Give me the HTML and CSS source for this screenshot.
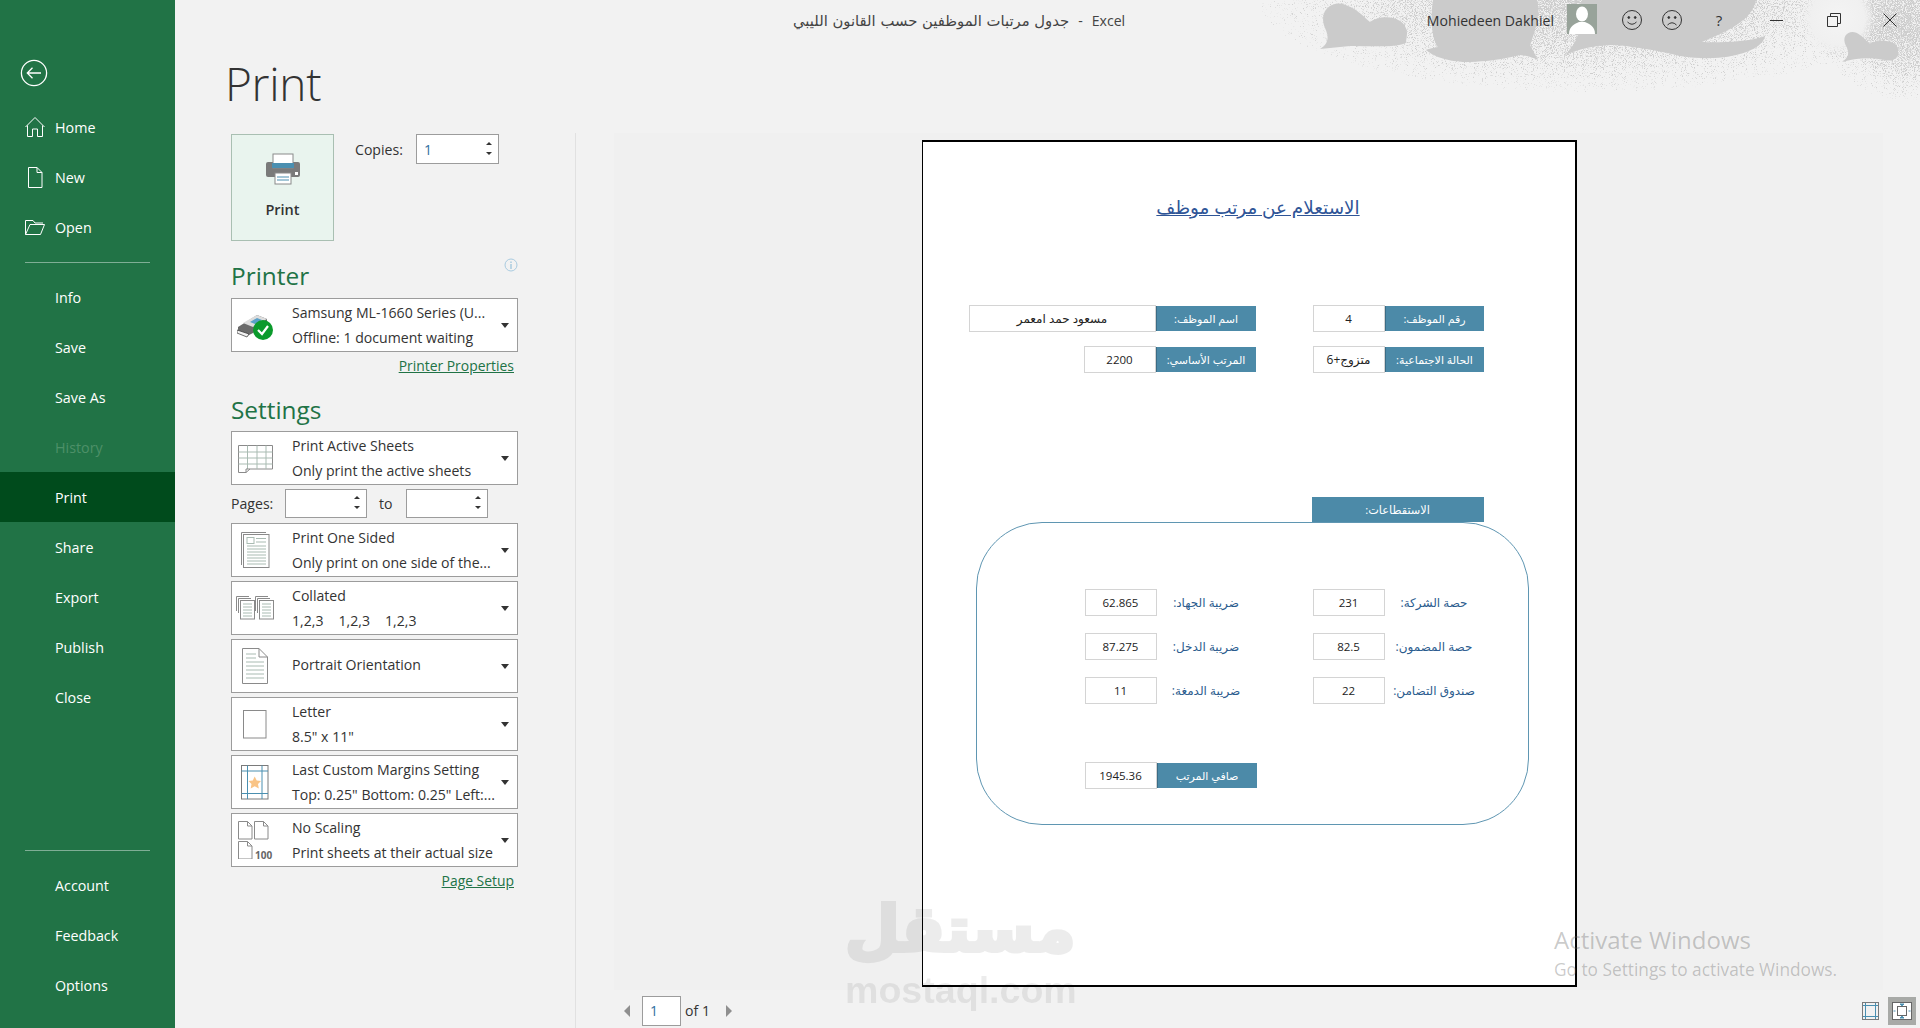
FILE: index.html
```html
<!DOCTYPE html>
<html lang="en">
<head>
<meta charset="utf-8">
<title>Print - Excel</title>
<link rel="stylesheet" href="styles.css">
</head>
<body>
<aside class="sidebar">
  <div class="back">
    <svg width="30" height="30" viewBox="0 0 30 30" fill="none" stroke="#fff" stroke-width="1.3"><circle cx="15" cy="15" r="12.6"/><path d="M22 15H8.5M13.5 9.8 8.3 15l5.2 5.2"/></svg>
  </div>
  <nav class="nav">
    <a class="nav-item"><svg class="nav-icon" width="22" height="22" viewBox="0 0 22 22" fill="none" stroke="#fff" stroke-width="1"><path d="M1.5 11 11 1.5 20.5 11M3.5 9.5V20.5H8.5V13H13.500V20.5H18.500V9.500"/></svg>Home</a>
    <a class="nav-item"><svg class="nav-icon" width="22" height="22" viewBox="0 0 22 22" fill="none" stroke="#fff" stroke-width="1"><path d="M4.500 1.500H13L18 6.500V21.500H4.500ZM13 1.500V6.500H18"/></svg>New</a>
    <a class="nav-item"><svg class="nav-icon" width="22" height="22" viewBox="0 0 22 22" fill="none" stroke="#fff" stroke-width="1"><path d="M1.500 18.500V4.500H9L11 7H19M1.500 18.500H16.500L20.500 8.500H6L1.500 18.500"/></svg>Open</a>
  </nav>
  <hr class="nav-rule">
  <nav class="nav">
    <a class="nav-item">Info</a>
    <a class="nav-item">Save</a>
    <a class="nav-item">Save As</a>
    <a class="nav-item disabled">History</a>
    <a class="nav-item active">Print</a>
    <a class="nav-item">Share</a>
    <a class="nav-item">Export</a>
    <a class="nav-item">Publish</a>
    <a class="nav-item">Close</a>
  </nav>
  <div class="nav-bottom">
    <hr class="nav-rule">
    <nav class="nav">
      <a class="nav-item">Account</a>
      <a class="nav-item">Feedback</a>
      <a class="nav-item">Options</a>
    </nav>
  </div>
</aside>

<main class="main">
  <svg class="clouds" width="680" height="110" viewBox="0 0 680 110">
    <defs>
      <radialGradient id="fadeA"><stop offset="0" stop-opacity=".8"/><stop offset=".55" stop-opacity=".56"/><stop offset="1" stop-opacity=".2"/></radialGradient>
      <radialGradient id="glow"><stop offset="0" stop-color="#f4f4f4"/><stop offset=".7" stop-color="#f0f0f0"/><stop offset="1" stop-color="#f0f0f0" stop-opacity="0"/></radialGradient>
      <filter id="grain" x="0" y="0" width="100%" height="100%" color-interpolation-filters="sRGB">
        <feTurbulence type="fractalNoise" baseFrequency="1.1" numOctaves="2" seed="4" result="n"/>
        <feColorMatrix in="n" type="matrix" values="0 0 0 0 0  0 0 0 0 0  0 0 0 0 0  1.8 0 0 0 -.4" result="na"/>
        <feComposite in="SourceAlpha" in2="na" operator="arithmetic" k2="1" k3="1" k4="-1" result="t"/>
        <feComponentTransfer in="t" result="d"><feFuncA type="linear" slope="3"/></feComponentTransfer>
        <feFlood flood-color="#cdcdcd"/>
        <feComposite in2="d" operator="in"/>
      </filter>
    </defs>
    <g filter="url(#grain)">
      <ellipse cx="350" cy="0" rx="330" ry="92" fill="url(#fadeA)"/>
      <ellipse cx="670" cy="30" rx="90" ry="70" fill="url(#fadeA)"/>
    </g>
    <circle cx="598" cy="18" r="38" fill="url(#glow)"/>
    <g class="cloud-shape">
      <path d="M80 49Q92 42 85 28C78 10 92 1 103 4 116 8 122 15 130 22 140 14 165 15 167 32 167 40 165 42 167 42 160 48 130 46 110 46 95 45 80 49Z"/>
      <path d="M193 0C190 20 192 40 198 47 190 48 186 50 186 50 200 62 225 62 225 62 255 62 280 55 280 55 290 56 298 60 298 60L290 45C298 25 300 10 297 0Z"/>
      <path d="M342 0C342 25 340 40 325 55 350 44 375 45 375 45 410 48 440 56 440 56 490 64 515 48 515 48 525 42 525 36 525 36 505 44 462 42 462 42 490 30 512 20 516 0Z"/>
      <path d="M602 62Q612 55 606 46C600 34 612 28 620 35 625 38 627 42 630 44 640 38 660 40 658 52 660 58 652 62 645 60 630 57 615 58 602 62Z"/>
    </g>
  </svg>

  <header class="titlebar">
    <div class="doc-title"><bdi class="ar">جدول مرتبات الموظفين حسب القانون الليبي</bdi><span class="sep">-</span>Excel</div>
    <div class="user">
      <span class="user-name">Mohiedeen Dakhiel</span>
      <svg class="avatar" width="30" height="30" viewBox="0 0 30 30"><rect width="30" height="30" fill="#98a39a"/><ellipse cx="15" cy="10" rx="6" ry="7.500" fill="#fff"/><path d="M2 30C2 22 8 20 12 18H18C22 20 28 22 28 30Z" fill="#fff"/></svg>
      <svg class="tb-smile" width="22" height="22" viewBox="0 0 22 22" fill="none" stroke="#333" stroke-width="1"><circle cx="11" cy="11" r="9.500"/><circle cx="7.800" cy="8.500" r=".9" fill="#333"/><circle cx="14.200" cy="8.500" r=".9" fill="#333"/><path d="M6.500 13Q11 17.500 15.500 13"/></svg>
      <svg class="tb-frown" width="22" height="22" viewBox="0 0 22 22" fill="none" stroke="#333" stroke-width="1"><circle cx="11" cy="11" r="9.500"/><circle cx="7.800" cy="8.500" r=".9" fill="#333"/><circle cx="14.200" cy="8.500" r=".9" fill="#333"/><path d="M6.500 16Q11 11.500 15.500 16"/></svg>
      <span class="help">?</span>
      <svg class="tb-min" width="14" height="14" viewBox="0 0 14 14" stroke="#333" stroke-width="1"><path d="M0 7.500H13"/></svg>
      <svg class="tb-restore" width="14" height="14" viewBox="0 0 14 14" fill="none" stroke="#333" stroke-width="1"><path d="M.5 3.500H10.500V13.500H.5ZM3.500 3.500V.5H13.500V10.500H10.500"/></svg>
      <svg class="tb-close" width="14" height="14" viewBox="0 0 14 14" stroke="#333" stroke-width="1"><path d="M.5.5 13.500 13.500M13.500.5.5 13.500"/></svg>
    </div>
  </header>

  <h1 class="page-title">Print</h1>

  <div class="workspace">
    <section class="panel">
      <div class="print-row">
        <button class="print-btn">
          <svg width="36" height="32" viewBox="0 0 36 32"><path d="M3 9H33Q35 9 35 11V22Q35 24 33 24H3Q1 24 1 22V11Q1 9 3 9Z" fill="#7a7a7a"/><rect x="8" y="1" width="20" height="14" fill="#fff" stroke="#8a8a8a"/><rect x="7" y="10" width="22" height="5" fill="#4a8fb0"/><rect x="10" y="20" width="16" height="11" fill="#fff" stroke="#8a8a8a"/><path d="M12 24H24M12 27H24" stroke="#4a8fb0"/><rect x="30" y="19" width="3" height="3" fill="#fff"/></svg>
          <span>Print</span>
        </button>
        <div class="copies">
          <label>Copies:</label>
          <div class="spin spin-copies"><span class="spin-val">1</span><span class="arrows"><i class="up"></i><i class="down"></i></span></div>
        </div>
      </div>

      <div class="sec-head printer-head">
        <h2>Printer</h2>
        <svg width="14" height="14" viewBox="0 0 14 14" fill="none" stroke="#a9cbe0"><circle cx="7" cy="7" r="6"/><path d="M7 3.500V5M7 6V11" stroke-width="1.500"/></svg>
      </div>
      <div class="combo">
        <span class="combo-icon"><svg width="36" height="30" viewBox="0 0 36 30"><path d="M1 17 20 5 30 9 30 16 10 26 1 22Z" fill="#6a6a6a"/><path d="M6 13 20 5 30 9 16 17Z" fill="#ddd"/><path d="M13 12 20 8 25 10 18 14Z" fill="#5aa0c8"/><path d="M0 20 12 24 10 27 0 23Z" fill="#f2f2f2" stroke="#333" stroke-width=".7"/><circle cx="26" cy="20" r="10" fill="#0b9a2c"/><path d="M21 20 25 24 31 16" fill="none" stroke="#fff" stroke-width="2.200"/></svg></span>
        <span class="combo-text"><b>Samsung ML-1660 Series (U...</b><b>Offline: 1 document waiting</b></span>
        <i class="caret"></i>
      </div>
      <div class="link-row"><a class="link">Printer Properties</a></div>

      <h2 class="settings-head">Settings</h2>
      <div class="combo">
        <span class="combo-icon"><svg width="36" height="30" viewBox="0 0 36 30" fill="none"><path d="M1.500 2.500H35.500V26H13L9 29.500H1.500Z" fill="#fff" stroke="#8a8a8a"/><path d="M1.500 9H35.500M1.500 15H35.500M1.500 21H35.500M10.500 2.500V26M20 2.500V26M29 2.500V26" stroke="#a9bbb2"/><path d="M9 29.500V26H13" stroke="#8a8a8a"/></svg></span>
        <span class="combo-text"><b>Print Active Sheets</b><b>Only print the active sheets</b></span>
        <i class="caret"></i>
      </div>
      <div class="pages-row">
        <label>Pages:</label>
        <div class="spin spin-page"><span class="spin-val"></span><span class="arrows"><i class="up"></i><i class="down"></i></span></div>
        <label class="to">to</label>
        <div class="spin spin-page"><span class="spin-val"></span><span class="arrows"><i class="up"></i><i class="down"></i></span></div>
      </div>
      <div class="combo">
        <span class="combo-icon"><svg width="30" height="38" viewBox="0 0 30 38" fill="none"><path d="M1.500 34V1.500H26" stroke="#8a8a8a"/><rect x="3.500" y="3.500" width="25.500" height="33" fill="#fff" stroke="#8a8a8a"/><rect x="7" y="6.500" width="7" height="6" stroke="#a9bbb2"/><path d="M16 7.500H26M16 11H26M7 15H26M7 18H26M7 21H26M7 24H26M7 27H26M7 30H26M7 33H26" stroke="#a9bbb2"/></svg></span>
        <span class="combo-text"><b>Print One Sided</b><b>Only print on one side of the...</b></span>
        <i class="caret"></i>
      </div>
      <div class="combo">
        <span class="combo-icon"><svg width="38" height="24" viewBox="0 0 38 24" fill="none" stroke="#8a8a8a"><path d="M.5 15V.5H13M2.500 17V2.500H15"/><rect x="4.500" y="4.500" width="14" height="18.500" fill="#fff"/><path d="M7 8H16M7 11H16M7 14H16M7 17H16M7 20H16" stroke="#a9bbb2"/><path d="M19.500 15V.5H32M21.500 17V2.500H34"/><rect x="23.500" y="4.500" width="14" height="18.500" fill="#fff"/><path d="M26 8H35M26 11H35M26 14H35M26 17H35M26 20H35" stroke="#a9bbb2"/></svg></span>
        <span class="combo-text"><b>Collated</b><b class="collate"><em>1,2,3</em><em>1,2,3</em><em>1,2,3</em></b></span>
        <i class="caret"></i>
      </div>
      <div class="combo">
        <span class="combo-icon"><svg width="26" height="36" viewBox="0 0 26 36" fill="none"><path d="M.5.5H17L25.500 9V35.500H.5ZM17 .5V9H25.500" fill="#fff" stroke="#8a8a8a"/><path d="M4 6H14M4 10H14M4 14H22M4 18H22M4 22H22M4 26H22M4 30H22" stroke="#a9bbb2"/></svg></span>
        <span class="combo-text single"><b>Portrait Orientation</b></span>
        <i class="caret"></i>
      </div>
      <div class="combo">
        <span class="combo-icon"><svg width="24" height="29" viewBox="0 0 24 29"><rect x=".5" y=".5" width="22.500" height="27.500" fill="#fff" stroke="#8a8a8a"/></svg></span>
        <span class="combo-text"><b>Letter</b><b>8.5" x 11"</b></span>
        <i class="caret"></i>
      </div>
      <div class="combo">
        <span class="combo-icon"><svg width="28" height="35" viewBox="0 0 28 35" fill="none"><rect x=".5" y=".5" width="26.500" height="33.500" fill="#fff" stroke="#7a7a7a"/><path d="M6.500 .5V34M21 .5V34M.5 6H27M.5 28.500H27" stroke="#4a8fb0"/><path d="M13.700 11.500 15.700 15.500 20 16 17 19 17.800 23.500 13.700 21.300 9.700 23.500 10.500 19 7.500 16 11.800 15.500Z" fill="#f9c486"/></svg></span>
        <span class="combo-text"><b>Last Custom Margins Setting</b><b>Top: 0.25" Bottom: 0.25" Left:...</b></span>
        <i class="caret"></i>
      </div>
      <div class="combo">
        <span class="combo-icon scale-icon"><svg width="34" height="38" viewBox="0 0 34 38" fill="none" stroke="#8a8a8a"><path d="M.5.5H9.500L14 5V18H.5ZM9.500.5V5H14M16.500.5H25.500L30 5V18H16.500ZM25.500.5V5H30M.5 20.500H9.500L14 25V38H.5ZM9.500 20.500V25H14"/></svg><span class="scale-num">100</span></span>
        <span class="combo-text"><b>No Scaling</b><b>Print sheets at their actual size</b></span>
        <i class="caret"></i>
      </div>
      <div class="link-row"><a class="link">Page Setup</a></div>
    </section>

    <section class="preview-col">
      <div class="preview">
        <article class="sheet" dir="ltr">
          <h3 class="sheet-title">الاستعلام عن مرتب موظف</h3>
          <div class="fields">
            <div class="val ar-val">مسعود حمد امعمر</div><div class="lab">اسم الموظف:</div><span></span><div class="val">4</div><div class="lab">رقم الموظف:</div>
            <div class="val short">2200</div><div class="lab">المرتب الأساسي:</div><span></span><div class="val ar-val" dir="rtl">متزوج+6</div><div class="lab">الحالة الاجتماعية:</div>
          </div>
          <div class="ded-head">الاستقطاعات:</div>
          <div class="ded-box">
            <div class="ded-grid">
              <div class="val">62.865</div><div class="dlab">ضريبة الجهاد:</div><span></span><div class="val">231</div><div class="dlab">حصة الشركة:</div>
              <div class="val">87.275</div><div class="dlab">ضريبة الدخل:</div><span></span><div class="val">82.5</div><div class="dlab">حصة المضمون:</div>
              <div class="val">11</div><div class="dlab">ضريبة الدمغة:</div><span></span><div class="val">22</div><div class="dlab">صندوق التضامن:</div>
            </div>
            <div class="net"><div class="val">1945.36</div><div class="lab">صافي المرتب</div></div>
          </div>
        </article>
      </div>
      <footer class="pager">
        <i class="tri-left"></i>
        <span class="page-num">1</span>
        <span class="of">of 1</span>
        <i class="tri-right"></i>
        <span class="view-btns">
          <svg width="18" height="18" viewBox="0 0 18 18" fill="none"><rect x=".5" y=".5" width="16" height="17" stroke="#7a7a7a"/><path d="M3.500 1V17M13.500 1V17M1 3.500H16M1 14.500H16" stroke="#4a8fb0"/></svg>
          <span class="view-active"><svg width="20" height="18" viewBox="0 0 20 18" fill="none"><rect x=".5" y=".5" width="19" height="17" fill="#fff" stroke="#666"/><rect x="5.500" y="4.500" width="9" height="9" stroke="#666"/><path d="M3.500 9H1.500M16.500 9H18.500M8 2H12L10 3.800ZM8 16H12L10 14.200Z" stroke="#4a8fb0" fill="#4a8fb0"/></svg></span>
        </span>
      </footer>
    </section>
  </div>

  <div class="watermark">
    <div class="wm-ar">مستقل</div>
    <div class="wm-en">mostaql.com</div>
  </div>
  <div class="activate">
    <div class="act-1">Activate Windows</div>
    <div class="act-2">Go to Settings to activate Windows.</div>
  </div>
</main>
</body>
</html>
```

FILE: styles.css
```css
* { box-sizing: border-box; }
html, body { height: 100%; }
body {
  margin: 0;
  display: flex;
  height: 1028px;
  overflow: hidden;
  background: #f2f2f2;
  color: #333;
  font-family: "Open Sans", "DejaVu Sans", sans-serif;
  font-size: 14.1px;
}
.sidebar {
  width: 175px;
  flex: none;
  background: #217346;
  color: #fff;
  display: flex;
  flex-direction: column;
}
.back { height: 102px; padding: 58px 0 0 19px; }
.back svg { display: block; }
.nav { display: flex; flex-direction: column; }
.nav-item {
  position: relative;
  height: 50px;
  padding-left: 55px;
  display: flex;
  align-items: center;
  font-size: 14.3px;
  color: #fff;
}
.nav-icon { position: absolute; left: 24px; top: 14px; }
.nav-item.disabled { color: #4d9068; }
.nav-item.active { background: #004b1c; }
.nav-rule { border: 0; height: 1px; background: #7fae95; margin: 10px 25px 9px; width: 125px; }
.nav-bottom { margin-top: auto; padding-bottom: 18px; }

.main { position: relative; flex: 1; min-width: 0; display: flex; flex-direction: column; }
.clouds { position: absolute; right: 0; top: 0; }
.cloud-shape path { fill: #cbcbcb; }
.titlebar { position: relative; height: 40px; display: flex; align-items: center; padding-left: 618px; }
.doc-title { white-space: nowrap; display: flex; align-items: center; color: #444; }
.doc-title .ar { font-family: "DejaVu Sans", sans-serif; font-size: 14.8px; }
.sep { margin: 0 9px; }
.user { margin-left: auto; display: flex; align-items: center; height: 40px; }
.user-name { color: #333; }
.avatar { margin-left: 13px; margin-top: -2px; }
.tb-smile { margin-left: 24px; }
.tb-frown { margin-left: 18px; }
.help { margin-left: 31px; width: 10px; text-align: center; font-size: 15px; }
.tb-min { margin-left: 46px; }
.tb-restore { margin-left: 43px; }
.tb-close { margin-left: 42px; margin-right: 23px; }

.page-title {
  margin: 0;
  height: 93px;
  padding: 13px 0 0 50px;
  font-size: 46px;
  line-height: 60px;
  font-weight: 300;
  color: #333;
  letter-spacing: -.3px;
}
.workspace { flex: 1; min-height: 0; display: flex; }
.panel { width: 401px; flex: none; border-right: 1px solid #e1e1e1; padding: 1px 0 0 56px; }
.print-row { display: flex; height: 107px; }
.print-btn {
  width: 103px;
  height: 107px;
  padding: 18px 0 0;
  border: 1px solid #a9bfb2;
  background: #e9f4ee;
  display: flex;
  flex-direction: column;
  align-items: center;
  font: inherit;
  font-size: 14.5px;
  font-weight: 600;
  color: #333;
}
.print-btn span { margin-top: 15px; }
.copies { margin-left: 21px; display: flex; height: 30px; align-items: center; }
.copies label { width: 61px; }
.spin {
  position: relative;
  display: flex;
  align-items: center;
  height: 30px;
  background: #fff;
  border: 1px solid #9c9c9c;
}
.spin-copies { width: 83px; padding-left: 7px; color: #2f6f9f; font-size: 14px; }
.spin-page { width: 82px; }
.arrows { position: absolute; right: 6px; top: 7px; display: flex; flex-direction: column; gap: 7px; }
.up, .down { display: block; width: 0; height: 0; border-left: 3px solid transparent; border-right: 3px solid transparent; }
.up { border-bottom: 3px solid #333; }
.down { border-top: 3px solid #333; }

.printer-head { position: relative; height: 57px; width: 287px; display: flex; justify-content: space-between; padding-top: 17px; }
.printer-head svg { margin-top: 0; }
h2 { margin: 0; font-size: 24.4px; font-weight: 400; color: #217346; line-height: 36px; }
.settings-head { height: 52px; padding-top: 17px; line-height: 28px; }

.combo {
  width: 287px;
  height: 54px;
  background: #fff;
  border: 1px solid #9c9c9c;
  display: flex;
  align-items: center;
  position: relative;
  margin-bottom: 4px;
}
.combo-icon { width: 60px; flex: none; display: flex; justify-content: center; align-items: center; padding-right: 14px; }
.combo-icon svg { display: block; }
.combo-text { display: flex; flex-direction: column; gap: 6px; white-space: nowrap; }
.combo-text.single { margin-top: -3px; }
.combo-text b { font-weight: 400; line-height: 19px; color: #333; }
.collate { display: flex; gap: 15px; }
.collate em { font-style: normal; }
.caret { position: absolute; right: 8px; top: 24px; width: 0; height: 0; border-left: 4.500px solid transparent; border-right: 4.500px solid transparent; border-top: 5px solid #333; }
.scale-icon { position: relative; justify-content: flex-start; padding-left: 6px; padding-right: 0; }
.scale-num { position: absolute; left: 23px; bottom: -3px; font-size: 10px; font-weight: 700; color: #666; }
.link-row { width: 283px; height: 27px; margin-top: -4px; display: flex; justify-content: flex-end; align-items: center; }
.link { color: #217346; text-decoration: underline; font-size: 13.9px; }
.pages-row { height: 29px; width: 287px; display: flex; align-items: center; margin: 1px 0 5px; }
.pages-row label { width: 54px; }
.pages-row .spin { height: 29px; }
.pages-row .to { width: 39px; padding-left: 12px; }
.pages-row .arrows { top: 6px; }

.preview-col { flex: 1; min-width: 0; display: flex; flex-direction: column; padding: 0 37px 0 38px; }
.preview { height: 857px; background: #f0f0f0; padding: 7px 0 0 1px; display: flex; justify-content: center; }
.sheet {
  width: 655px;
  height: 847px;
  background: #fff;
  border: 2px solid #000;
  border-left-width: 1px;
  padding-left: 1px;
  font-family: "Open Sans", "DejaVu Sans", sans-serif;
  font-size: 11.5px;
  color: #222;
}
.sheet-title {
  margin: 0;
  padding: 50px 0 0 18px;
  font-size: 18.4px;
  line-height: 30px;
  font-weight: 400;
  text-align: center;
  color: #2f5597;
  text-decoration: underline;
}
.fields {
  margin: 83px 0 0 45px;
  display: grid;
  grid-template-columns: 187px 100px 57px 72px 99px;
  grid-auto-rows: 27px;
  row-gap: 14px;
}
.val {
  background: #fff;
  border: 1px solid #d4d4d4;
  display: flex;
  align-items: center;
  justify-content: center;
}
.val.short { width: 72px; justify-self: end; }
.ar-val { font-size: 12px; }
.lab {
  margin: 1px 0;
  background: #4c8aa8;
  color: #fff;
  border-left: 1px solid #3b6c85;
  display: flex;
  align-items: center;
  justify-content: center;
  font-size: 11px;
  direction: rtl;
  white-space: nowrap;
}
.ded-head {
  margin: 124px 0 0 388px;
  width: 172px;
  height: 25px;
  background: #4c8aa8;
  color: #fff;
  display: flex;
  align-items: center;
  justify-content: center;
  font-size: 11.3px;
  direction: rtl;
}
.ded-box {
  margin-left: 52px;
  width: 553px;
  height: 303px;
  border: 1px solid #5f96b2;
  border-radius: 66px;
  padding: 66px 0 0 108px;
}
.ded-grid {
  display: grid;
  grid-template-columns: 72px 99px 57px 72px 99px;
  grid-auto-rows: 27px;
  row-gap: 17px;
}
.dlab { display: flex; align-items: center; justify-content: center; color: #2b5c8e; white-space: nowrap; font-size: 12px; direction: rtl; }
.net { display: grid; grid-template-columns: 72px 100px; grid-auto-rows: 27px; margin-top: 58px; }

.pager { position: relative; flex: 1; display: flex; align-items: center; padding: 3px 0 0 10px; }
.tri-left, .tri-right { display: block; width: 0; height: 0; border-top: 6px solid transparent; border-bottom: 6px solid transparent; }
.tri-left { border-right: 6px solid #8f8f8f; }
.tri-right { border-left: 6px solid #8f8f8f; margin-left: 16px; }
.page-num { width: 39px; height: 30px; margin-left: 12px; background: #fff; border: 1px solid #9c9c9c; padding: 4px 0 0 7px; color: #2f6f9f; font-size: 14px; }
.of { margin-left: 4px; }
.view-btns { margin-left: auto; margin-right: -33px; display: flex; align-items: center; gap: 8px; }
.view-active { width: 28px; height: 28px; background: #a8aaa7; display: flex; align-items: center; justify-content: center; }

.watermark { position: absolute; left: 670px; top: 885px; width: 230px; text-align: center; color: #000; opacity: .07; pointer-events: none; }
.wm-ar { font-family: "DejaVu Sans", sans-serif; font-weight: 700; font-size: 63px; line-height: 90px; -webkit-text-stroke: 4px #000; }
.wm-en { font-family: "Liberation Sans", sans-serif; font-weight: 700; font-size: 37.6px; line-height: 30px; white-space: nowrap; }
.activate { position: absolute; left: 1379px; top: 924px; color: rgba(90, 90, 90, .33); pointer-events: none; white-space: nowrap; }
.act-1 { font-size: 24px; line-height: 32px; }
.act-2 { font-size: 17.300px; line-height: 28px; }
```
